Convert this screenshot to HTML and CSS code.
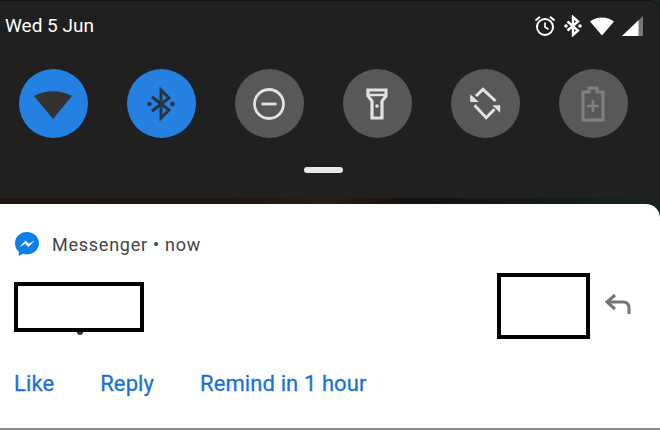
FILE: index.html
```html
<!DOCTYPE html>
<html>
<head>
	<meta charset="UTF-8">
	<title>Notification shade</title>
	<link rel="stylesheet" href="styles.css">
</head>
<body>
	<div class="shade">
		<div class="status">
			<span class="date">Wed 5 Jun</span>
			<div class="status-icons">
				<svg width="24" height="24" viewBox="0 0 24 24"><circle cx="12" cy="13" r="8" fill="none" stroke="#fff" stroke-width="2"/><path d="M12 8.500V13l3.500 2.200" fill="none" stroke="#fff" stroke-width="1.700"/><path d="M2.500 6.500 7 2.800M21.500 6.500 17 2.800" stroke="#fff" stroke-width="2"/></svg>
				<svg width="18" height="22" viewBox="0 0 18 22"><path d="M3.500 6.500 14 15.500 9 20V2l5 4.500L3.500 15.500" fill="none" stroke="#fff" stroke-width="2.400"/><circle cx="2" cy="11" r="1.800" fill="#fff"/><circle cx="16" cy="11" r="1.800" fill="#fff"/></svg>
				<svg width="26" height="20" viewBox="0 0 26 20"><path d="M1 5.500C8 .2 18 .2 25 5.500L13 19.500z" fill="#fff"/></svg>
				<svg width="22" height="20" viewBox="0 0 22 20"><path d="M21 0v20H0z" fill="#777"/><path d="M16.500 4.300V20H0z" fill="#fff"/></svg>
			</div>
		</div>
		<div class="tiles">
			<div class="tile on">
				<svg width="40" height="32" viewBox="0 0 40 32"><path d="M1 8C12 1.500 28 1.500 39 8L20 31z" fill="#333"/></svg>
			</div>
			<div class="tile on">
				<svg width="30" height="34" viewBox="0 0 30 34"><path d="M6 10 23 23 15 31V3l8 8L6 24" fill="none" stroke="#2a3440" stroke-width="3"/><circle cx="3.500" cy="17" r="2.300" fill="#2a3440"/><circle cx="26.500" cy="17" r="2.300" fill="#2a3440"/></svg>
			</div>
			<div class="tile">
				<svg width="34" height="34" viewBox="0 0 34 34"><circle cx="17" cy="17" r="14.500" fill="none" stroke="#e2e2e2" stroke-width="2.800"/><path d="M9.500 17h15" stroke="#e2e2e2" stroke-width="2.800"/></svg>
			</div>
			<div class="tile">
				<svg width="22" height="32" viewBox="0 0 22 32"><path d="M2 2h18v6l-4 5v17H6V13L2 8z" fill="none" stroke="#e2e2e2" stroke-width="3.200"/><path d="M2 7h18" stroke="#e2e2e2" stroke-width="2.500"/><circle cx="11" cy="18" r="1.800" fill="#e2e2e2"/></svg>
			</div>
			<div class="tile">
				<svg width="34" height="34" viewBox="0 0 34 34"><path d="M8 9 15 2.300 27.500 14M6.500 18.300 18.200 30.700 26.500 22.300" fill="none" stroke="#e2e2e2" stroke-width="3"/><path d="M2.200 7.300V15h8.600zM32.200 25.700V18.300H24.200z" fill="#e2e2e2"/></svg>
			</div>
			<div class="tile">
				<svg width="24" height="36" viewBox="0 0 24 36"><path d="M2 6h6V2h8v4h6v28H2z" fill="none" stroke="#808080" stroke-width="3"/><path d="M12 14v12M6 20h12" stroke="#808080" stroke-width="2.600"/></svg>
			</div>
		</div>
		<div class="handle"></div>
	</div>
	<div class="card">
		<div class="app-row">
			<svg width="26" height="26" viewBox="0 0 26 26"><path d="M13 1C6.200 1 1 5.900 1 12.300c0 3.400 1.400 6.300 3.800 8.300V25l4-2.200c1.300.4 2.700.6 4.200.6 6.800 0 12-4.900 12-11.100S19.800 1 13 1z" fill="#0f7fe8"/><path d="M5.500 16 11.500 9.500l3.200 3.200 5.800-3.200-6 6.500-3.200-3.200z" fill="#fff"/></svg>
			<span class="app-name">Messenger • now</span>
		</div>
		<div class="message">
			<div class="box box-name"></div>
			<div class="box box-photo"></div>
			<svg class="reply-icon" width="28" height="22" viewBox="0 0 28 22"><path d="M11 2 3 9l8 7" fill="none" stroke="#757575" stroke-width="3"/><path d="M3 9h16c4 0 6 2 6 6v6" fill="none" stroke="#757575" stroke-width="3"/></svg>
		</div>
		<div class="actions">
			<a class="action" href="">Like</a>
			<a class="action" href="">Reply</a>
			<a class="action" href="">Remind in 1 hour</a>
		</div>
	</div>
</body>
</html>
```

FILE: styles.css
```css
* {
	box-sizing: border-box;
}
body {
	margin: 0;
	width: 660px;
	height: 430px;
	overflow: hidden;
	background: linear-gradient(90deg, #1c1512 0%, #1d1714 35%, #2a1d14 50%, #14100e 62%, #141a1a 80%, #1a2222 100%);
	font-family: Roboto, "Liberation Sans", sans-serif;
	display: flex;
	flex-direction: column;
}
.shade {
	background: #202020;
	height: 198px;
	border-top-right-radius: 12px;
	border-top: 1px solid #111;
}
.status {
	display: flex;
	justify-content: space-between;
	align-items: center;
	height: 37px;
	padding: 12px 16px 0 5px;
}
.date {
	color: #fff;
	font-size: 19px;
}
.status-icons {
	display: flex;
	align-items: center;
	gap: 7px;
}
.tiles {
	display: flex;
	justify-content: space-between;
	padding: 31px 32px 0 18.5px;
}
.tile {
	width: 69px;
	height: 69px;
	border-radius: 50%;
	background: #585858;
	display: grid;
	place-items: center;
}
.tile.on {
	background: #2481e2;
}
.handle {
	width: 39px;
	height: 6px;
	margin: 29px auto 0;
	border-radius: 3px;
	background: #e8e8e8;
	transform: translateX(-7px);
}
.card {
	margin-top: 6px;
	flex: 1;
	background: #fff;
	border-radius: 0 14px 0 0;
	border-bottom: 2px solid #8a8a8a;
	padding: 27px 0 0 14px;
}
.app-row {
	display: flex;
	align-items: center;
	gap: 12px;
	height: 26px;
}
.app-name {
	color: #444;
	font-size: 18px;
	letter-spacing: .75px;
}
.message {
	display: flex;
	align-items: center;
	margin-top: 16px;
	height: 66px;
}
.box {
	border: 4px solid #000;
	background: #fff;
}
.box-name {
	width: 130px;
	height: 50px;
	position: relative;
	top: 1px;
}
.box-name::after {
	content: "";
	position: absolute;
	left: 59px;
	bottom: -7px;
	width: 6px;
	height: 3px;
	border-radius: 0 0 3px 3px;
	background: #333;
}
.box-photo {
	width: 93px;
	height: 66px;
	margin-left: 353px;
}
.reply-icon {
	margin: 0 0 4px 14px;
}
.actions {
	display: flex;
	gap: 46px;
	margin-top: 32px;
}
.action {
	color: #1a73d4;
	font-size: 22px;
	letter-spacing: .1px;
	text-decoration: none;
	-webkit-text-stroke: .3px #1a73d4;
}
```
